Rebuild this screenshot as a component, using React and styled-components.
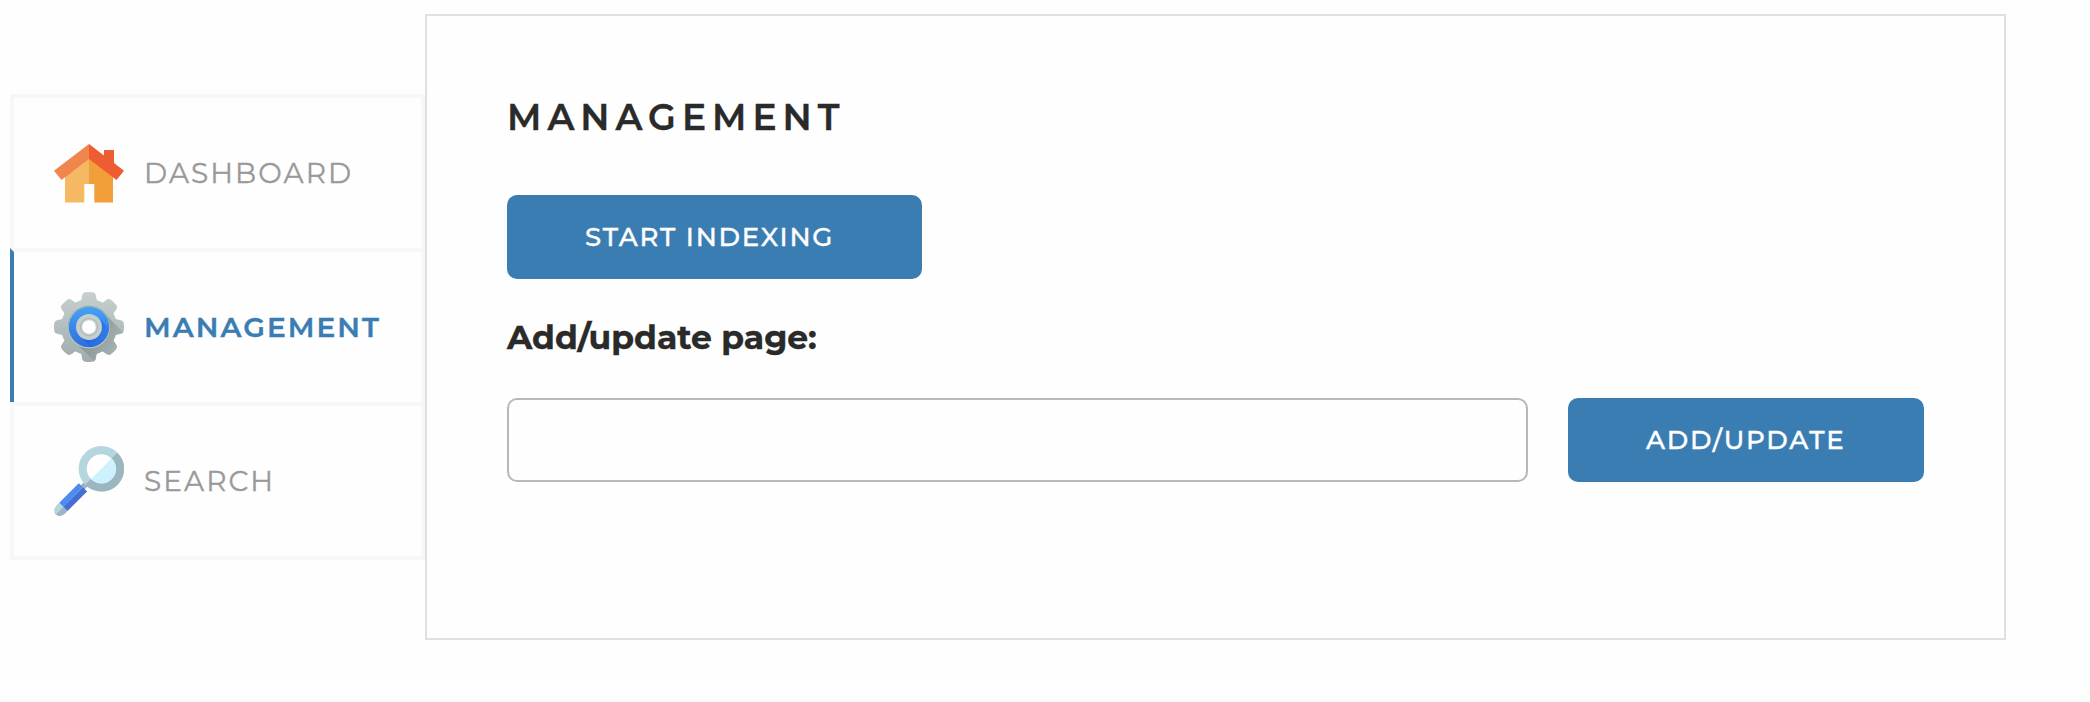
import React from "react";
import styled, { createGlobalStyle } from "styled-components";

const GlobalStyle = createGlobalStyle`
  *, *::before, *::after { box-sizing: border-box; }
  body {
    margin: 0;
    background: #fefefe;
    color: #2a2a2a;
    font-family: Montserrat, Inter, sans-serif;
    -webkit-text-stroke: 0.35px currentColor;
  }
`;

const Page = styled.div`
  display: flex;
  align-items: flex-start;
  width: 2090px;
  height: 702px;
  padding: 14px 84px 0 10px;
`;

const Nav = styled.nav`
  display: flex;
  flex-direction: column;
  width: 415px;
  margin-top: 80px;
`;

const NavItem = styled.a`
  display: flex;
  align-items: center;
  gap: 20px;
  height: 154px;
  padding: 0 0 0 40px;
  border: 4px solid #f7f7f7;
  border-bottom-width: 0;
  border-left-color: ${({ $active }) => ($active ? "#3a7db3" : "#f7f7f7")};
  color: ${({ $active }) => ($active ? "#3a7db3" : "#999")};
  font-size: 28px;
  font-weight: ${({ $active }) => ($active ? 600 : 400)};
  line-height: 34px;
  letter-spacing: 2.05px;
  text-decoration: none;

  &:last-child {
    height: 158px;
    border-bottom-width: 4px;
  }
`;

const Icon = styled.svg`
  flex: none;
  width: 70px;
  height: 70px;
`;

const Panel = styled.main`
  flex: 1;
  height: 626px;
  padding: 79px 80px 0;
  border: 2px solid #e0e0e0;
`;

const Title = styled.h1`
  margin: 0 0 56px;
  font-size: 36px;
  font-weight: 600;
  line-height: 44px;
  letter-spacing: 6px;
`;

const Button = styled.button`
  flex: none;
  display: block;
  width: ${({ $wide }) => ($wide ? "415px" : "356px")};
  height: 84px;
  padding: 0 0 0 78px;
  border: 0;
  border-radius: 10px;
  background: #3a7db3;
  color: #fff;
  font: 500 26px/32px Montserrat, Inter, sans-serif;
  letter-spacing: 1.78px;
  text-align: left;
`;

const Label = styled.label`
  display: block;
  margin: 38px 0 40px;
  font-size: 33px;
  font-weight: 700;
  line-height: 41px;
`;

const FormRow = styled.div`
  display: flex;
  gap: 40px;
`;

const Input = styled.input`
  flex: 1;
  min-width: 0;
  height: 84px;
  padding: 0 20px;
  border: 2px solid #b8b8b8;
  border-radius: 10px;
  background: transparent;
  font: 28px Montserrat, Inter, sans-serif;
`;

const HouseIcon = () => (
  <Icon viewBox="0 0 70 70" aria-hidden="true">
    <path fill="#f5b963" d="M35 19V46h-4.7v18.500H11V39z" />
    <path fill="#f29f3a" d="M35 19V46h5.3v18.500H59V39z" />
    <path fill="#f0854e" d="M35 6 0 32.7 7.5 42 35 21z" />
    <path fill="#ee5c31" d="M35 6 50 17.4V12h10v13l10 7.7L62.5 42 35 21z" />
  </Icon>
);

const TOOTH_ANGLES = [0, 45, 90, 135, 180, 225, 270, 315];

const GearIcon = () => (
  <Icon viewBox="0 0 70 70" aria-hidden="true">
    <defs>
      <linearGradient id="gearMetal" x1="0" y1="0" x2="0" y2="70" gradientUnits="userSpaceOnUse">
        <stop offset="0" stopColor="#c6d0cf" />
        <stop offset="1" stopColor="#a0adad" />
      </linearGradient>
      <linearGradient id="gearBlue" x1="0" y1="14" x2="0" y2="56" gradientUnits="userSpaceOnUse">
        <stop offset="0" stopColor="#46a3f5" />
        <stop offset="1" stopColor="#2c6edf" />
      </linearGradient>
      <linearGradient id="gearShadow" x1="38" y1="38" x2="60" y2="60" gradientUnits="userSpaceOnUse">
        <stop offset="0" stopColor="#5a6463" stopOpacity=".45" />
        <stop offset="1" stopColor="#5a6463" stopOpacity=".02" />
      </linearGradient>
      <linearGradient id="ringShadow" x1="37" y1="37" x2="48" y2="48" gradientUnits="userSpaceOnUse">
        <stop offset="0" stopColor="#1544d8" stopOpacity=".6" />
        <stop offset="1" stopColor="#1b5be0" stopOpacity=".1" />
      </linearGradient>
      <clipPath id="gearShape">
        <circle cx="35" cy="35" r="28" />
        {TOOTH_ANGLES.map((angle) => (
          <path
            key={angle}
            transform={`rotate(${angle} 35 35)`}
            d="M24 12C27 9 27.5 8 28 4Q28.5 .4 31.5 .2Q35 -.2 38.5 .2Q41.5 .4 42 4C42.5 8 43 9 46 12z"
          />
        ))}
      </clipPath>
      <clipPath id="blueShape">
        <circle cx="35" cy="35" r="20.3" />
      </clipPath>
    </defs>
    <g clipPath="url(#gearShape)">
      <path fill="url(#gearMetal)" d="M0 0h70v70H0z" />
      <path fill="url(#gearShadow)" d="M49 20 78 49V78H49L20 49z" />
    </g>
    <circle cx="35" cy="35" r="21.2" fill="#8f9c9b" />
    <circle cx="35" cy="35.4" r="20.9" fill="#c1cbca" />
    <circle cx="35" cy="35" r="20.3" fill="url(#gearBlue)" />
    <g clipPath="url(#blueShape)">
      <path fill="url(#ringShadow)" d="M44.2 25.8 62 43.6V62H43.6L25.8 44.2z" />
    </g>
    <circle cx="35" cy="35" r="13" fill="#c5cecd" />
    <circle cx="35" cy="35" r="9.3" fill="#b0baba" />
    <circle cx="35" cy="35" r="8" fill="#c8d0d0" />
    <circle cx="35" cy="35" r="6.8" fill="#fff" />
  </Icon>
);

const MagnifierIcon = () => (
  <Icon viewBox="0 0 70 70" aria-hidden="true">
    <path fill="#9bb6be" d="m26.5 39.5 5-5 4 4-5 5z" />
    <circle cx="47.3" cy="22.7" r="22.7" fill="#b5d5df" />
    <path fill="#9bb6c0" d="M63.35 6.65A22.7 22.7 0 1 1 31.25 38.75z" />
    <circle cx="47.3" cy="22.7" r="14.5" fill="#fff" />
    <path fill="#cdf1fd" d="M57.55 12.45A14.5 14.5 0 1 1 37.05 32.95z" />
    <path fill="#b5d5df" d="M5.3 56.8C0 61-1 65 1.5 68.500L9.5 60.5z" />
    <path fill="#9bb6c0" d="M13.5 65C9 70.500 4.500 71 1.5 68.500L9.5 60.5z" />
    <path fill="#4d8bf0" d="m24.7 37.2 4.2 4.1L9.5 60.7l-4.2-4z" />
    <path fill="#456fd2" d="m28.9 41.3 4.2 4.3L13.5 65l-4.2-4.3z" />
  </Icon>
);

export default function App() {
  return (
    <>
      <GlobalStyle />
      <Page>
        <Nav>
          <NavItem><HouseIcon />DASHBOARD</NavItem>
          <NavItem $active><GearIcon />MANAGEMENT</NavItem>
          <NavItem><MagnifierIcon />SEARCH</NavItem>
        </Nav>
        <Panel>
          <Title>MANAGEMENT</Title>
          <Button $wide>START INDEXING</Button>
          <Label htmlFor="page-url">Add/update page:</Label>
          <FormRow>
            <Input id="page-url" />
            <Button>ADD/UPDATE</Button>
          </FormRow>
        </Panel>
      </Page>
    </>
  );
}
